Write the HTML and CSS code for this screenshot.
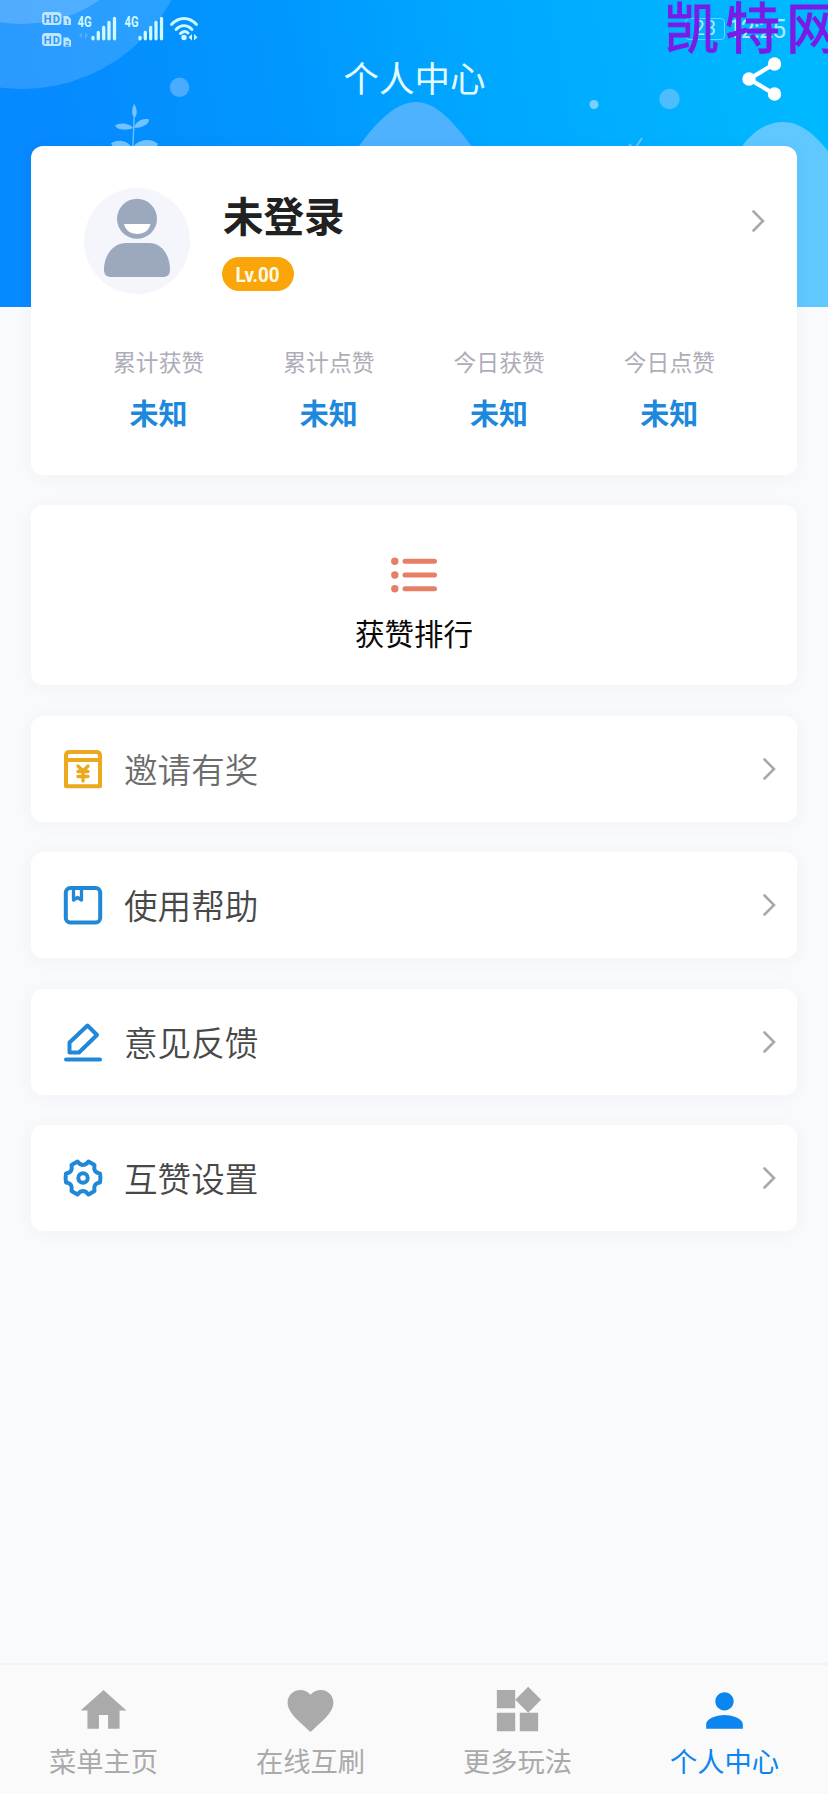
FILE: index.html
```html
<!DOCTYPE html>
<html lang="zh-CN">
<head>
<meta charset="utf-8">
<title>个人中心</title>
<link rel="stylesheet" href="styles.css">
</head>
<body>
<div class="screen">
  <header class="hero">
    <svg class="hero-art" viewBox="0 0 828 307" aria-hidden="true">
      <circle cx="22" cy="-81" r="170" fill="#fff" opacity=".15"/>
      <circle cx="22" cy="-115" r="139" fill="#fff" opacity=".18"/>
      <circle cx="179.500" cy="87.300" r="9.700" fill="#4bacff"/>
      <circle cx="594" cy="104.500" r="4.500" fill="#79d0ff"/>
      <circle cx="669.500" cy="99" r="10.200" fill="#4dbdff"/>
      <path d="M355 152C378 118 398 102 416 102C436 102 453 121 476 152z" fill="#4eb2ff"/>
      <path d="M738 152C751 132 766 122 783 122C801 122 815 135 828 151V307H738z" fill="#5fc8ff"/>
      <g fill="#72c4ff">
        <path d="M134.200 104C138 109 137 117 134.500 117C131.500 117 131.300 108 134.200 104z"/>
        <path d="M134 128C136 121 143 118 149 119.500C149 125 141 128 134 128z"/>
        <path d="M133 128C130 123 120 122 115 125.500C118 131 128 130 133 128z"/>
        <path d="M134 146C138 140 151 137 158 144L156 148H134z"/>
        <path d="M132 148C128 140 116 139 111 143.500L114 148z"/>
        <path d="M134.300 115L132.800 148" stroke="#72c4ff" stroke-width="1.300"/>
      </g>
      <path d="M636 147L642 138M632 147L629 144" stroke="#5fc8ff" stroke-width="2"/>
    </svg>
    <div class="status">
      <svg class="signals" width="170" height="40" viewBox="36 8 170 40" aria-hidden="true">
        <g fill="#bfe6ff">
          <rect x="42" y="12" width="19.500" height="13" rx="3.500"/>
          <rect x="42" y="33" width="19.500" height="13" rx="3.500"/>
          <path d="M63.500 16H68L71 19V25H63.500zM63.500 37.500H68L71 40.500V46.500H63.500z"/>
        </g>
        <g class="hd"><text x="43.800" y="22.700" textLength="16">HD</text><text x="43.800" y="43.700" textLength="16">HD</text></g>
        <g class="sim"><text x="65" y="24">1</text><text x="65" y="45.500">2</text></g>
        <g class="net"><text x="77.500" y="27" textLength="14" lengthAdjust="spacingAndGlyphs">4G</text><text x="124.500" y="27" textLength="14" lengthAdjust="spacingAndGlyphs">4G</text></g>
        <g stroke="#d0f8ff" stroke-width="3.300" stroke-linecap="round">
          <path d="M93 37.500V38.800M98.300 32.500V38.800M103.700 27.500V38.800M109 22.500V38.800M114.500 18.500V38.800"/>
          <path d="M140 37.500V38.800M145.300 32.500V38.800M150.700 27.500V38.800M156 22.500V38.800M161.500 18.500V38.800"/>
        </g>
        <path d="M82 32L79 35.500L82 39zM85 32L88 35.500L85 39z" fill="#4cb0ff"/>
        <g fill="none" stroke="#d0f8ff" stroke-width="3" stroke-linecap="round">
          <path d="M171.500 24.500C179 16.500 189 16.500 196.500 24.500M176 29.500C181 24.500 187 24.500 192 29.500M180.500 33.500C183 31 186 31 188 33"/>
        </g>
        <circle cx="184" cy="37.500" r="2.700" fill="#d0f8ff"/>
        <path d="M192 34L188.500 37.200L192 40.400zM194 34L197.500 37.200L194 40.400z" fill="#d0f8ff"/>
      </svg>
      <div class="status-right">
        <span class="battery">23</span>
        <span class="clock">12:25</span>
      </div>
    </div>
    <div class="titlebar">
      <h1>个人中心</h1>
      <svg class="share" width="44" height="48" viewBox="738 55 44 48" aria-hidden="true">
        <path d="M773.500 64L748 79L773.500 94" fill="none" stroke="#fff" stroke-width="4.300"/>
        <g fill="#fff"><circle cx="748" cy="79" r="6.700"/><circle cx="773.500" cy="64" r="6.700"/><circle cx="773.500" cy="94" r="6.700"/></g>
      </svg>
    </div>
    <span class="watermark">凯特网</span>
  </header>

  <main class="content">
    <section class="card profile">
      <div class="user">
        <svg class="avatar" width="106" height="106" viewBox="84 188.500 106 106" aria-hidden="true">
          <circle cx="137" cy="241.500" r="53" fill="#f5f6fc"/>
          <circle cx="137" cy="219.300" r="20" fill="#9ba8be"/>
          <path d="M124 224.500H150.500C149 231 144 234.500 137.300 234.500S125.500 231 124 224.500z" fill="#fff"/>
          <path d="M126 243.500H149C162 243.500 170 256 170 270C170 275 168 277.500 162 277.500H112C106 277.500 104 275 104 270C104 256 113 243.500 126 243.500z" fill="#9ba8be"/>
        </svg>
        <div class="who">
          <h2>未登录</h2>
          <span class="level"><b>Lv.00</b></span>
        </div>
        <svg class="chevron" width="13" height="22" viewBox="0 0 13 22"><path d="M1.500 1.500L11 11L1.500 20.500"/></svg>
      </div>
      <dl class="stats">
        <div><dt>累计获赞</dt><dd>未知</dd></div>
        <div><dt>累计点赞</dt><dd>未知</dd></div>
        <div><dt>今日获赞</dt><dd>未知</dd></div>
        <div><dt>今日点赞</dt><dd>未知</dd></div>
      </dl>
    </section>

    <section class="card rank">
      <svg width="46" height="36" viewBox="0 0 46 36" aria-hidden="true">
        <g fill="#e67f66"><circle cx="3.800" cy="4.300" r="3.700"/><circle cx="3.800" cy="18" r="3.700"/><circle cx="3.800" cy="31.700" r="3.700"/></g>
        <path d="M14 4.300H43.500M14 18H43.500M14 31.700H43.500" stroke="#e67f66" stroke-width="5" stroke-linecap="round"/>
      </svg>
      <span>获赞排行</span>
    </section>

    <a class="card row row-light">
      <svg class="icon gold" width="40" height="40" viewBox="0 0 40 40"><path d="M3 37.300V6.500Q3 3 6.500 3H33.500Q37 3 37 6.500V37.300zM3 11H37"/><path d="M15 17L20 22L25 17M20 22V32M15 22.500H25M15 27.500H25" stroke-width="3.300"/></svg>
      <span>邀请有奖</span>
      <svg class="chevron" width="13" height="22" viewBox="0 0 13 22"><path d="M1.500 1.500L11 11L1.500 20.500"/></svg>
    </a>
    <a class="card row">
      <svg class="icon" width="40" height="40" viewBox="0 0 40 40"><rect x="2.800" y="3" width="34.400" height="34.400" rx="4.500"/><path d="M10.500 3.500V15L14.500 12.500L18.500 15V3.500" stroke-width="3.300"/></svg>
      <span>使用帮助</span>
      <svg class="chevron" width="13" height="22" viewBox="0 0 13 22"><path d="M1.500 1.500L11 11L1.500 20.500"/></svg>
    </a>
    <a class="card row">
      <svg class="icon" width="40" height="40" viewBox="0 0 40 40"><path d="M24.500 3.500L34 13L16 30.500H6.500V20.500zM3 37.500H37"/></svg>
      <span>意见反馈</span>
      <svg class="chevron" width="13" height="22" viewBox="0 0 13 22"><path d="M1.500 1.500L11 11L1.500 20.500"/></svg>
    </a>
    <a class="card row">
      <svg class="icon" width="40" height="40" viewBox="0 0 40 40"><path d="M14.500 3.500C16 5.500 17.500 7 20 7S24 5.500 25.500 3.500L31.500 7C30.500 12 32 14.800 37 15.500Q37.800 20 37 24.500C32 25.200 30.500 28 31.500 33L25.500 36.500C24 34.500 22.500 33 20 33S16 34.500 14.500 36.500L8.500 33C9.500 28 8 25.200 3 24.500Q2.200 20 3 15.500C8 14.800 9.500 12 8.500 7z"/><circle cx="20" cy="20" r="4.700"/></svg>
      <span>互赞设置</span>
      <svg class="chevron" width="13" height="22" viewBox="0 0 13 22"><path d="M1.500 1.500L11 11L1.500 20.500"/></svg>
    </a>
  </main>

  <nav class="tabs">
    <a><svg viewBox="0 0 24 24"><path d="M10 20v-6h4v6h5v-8h3L12 3 2 12h3v8z"/></svg><span>菜单主页</span></a>
    <a><svg viewBox="0 0 24 24"><path d="M12 21.350l-1.450-1.320C5.400 15.360 2 12.280 2 8.500 2 5.420 4.420 3 7.500 3c1.740 0 3.410.810 4.500 2.090C13.090 3.810 14.760 3 16.500 3 19.580 3 22 5.420 22 8.500c0 3.780-3.400 6.860-8.550 11.540L12 21.350z"/></svg><span>在线互刷</span></a>
    <a><svg viewBox="0 0 24 24"><path d="M13 13v8h8v-8zM3 21h8v-8H3zM3 3v8h8V3zM16.660 1.690L11 7.340 16.660 13l5.660-5.660z"/></svg><span>更多玩法</span></a>
    <a class="active"><svg viewBox="0 0 24 24"><path d="M12 12c2.210 0 4-1.790 4-4s-1.790-4-4-4-4 1.790-4 4 1.790 4 4 4zm0 2c-2.670 0-8 1.340-8 4v2h16v-2c0-2.660-5.330-4-8-4z"/></svg><span>个人中心</span></a>
  </nav>
</div>
</body>
</html>
```
FILE: styles.css
```css
* { box-sizing: border-box; }
body, h1, h2, dl, dd { margin: 0; }
body {
  font-family: Roboto, "Noto Sans CJK SC", sans-serif;
  background: #f9fafc;
}
svg { display: block; flex: none; }

.screen {
  display: flex;
  flex-direction: column;
  height: 1794px;
  overflow: hidden;
}

.hero {
  position: relative;
  flex: none;
  height: 307px;
  overflow: hidden;
  background: linear-gradient(80deg, #0789ff 8%, #0098ff 38%, #00a8ff 60%, #00b8ff 95%);
}
.hero-art { position: absolute; inset: 0; width: 828px; height: 307px; }

.status {
  position: relative;
  display: flex;
  justify-content: space-between;
  height: 54px;
  padding: 8px 43px 0 36px;
}
.hd text { font: bold 11px Roboto, sans-serif; fill: #2b98f5; }
.sim text { font: bold 8px Roboto, sans-serif; fill: #2b98f5; }
.net text { font: bold 14.5px Roboto, sans-serif; fill: #d0f8ff; }
.status-right {
  display: flex;
  align-items: center;
  gap: 3px;
  height: 42px;
  color: #a8ecff;
}
.battery {
  width: 40px;
  height: 22px;
  border: 1.5px solid #62d4ff;
  border-radius: 4px;
  font-size: 20px;
  line-height: 19px;
  text-align: center;
}
.clock { font-size: 25px; letter-spacing: -1px; }

.titlebar {
  position: relative;
  display: grid;
  grid-template-columns: 90px 1fr 90px;
  align-items: center;
  height: 50px;
}
.titlebar h1 {
  grid-column: 2;
  padding: 3px 0 0 1px;
  font-size: 35.5px;
  font-weight: 400;
  line-height: 47px;
  text-align: center;
  color: #e4fcff;
}
.share { margin-left: 1px; }

.watermark {
  position: absolute;
  left: 664px;
  top: -6px;
  font: 400 55px/60px "Noto Sans CJK SC", sans-serif;
  letter-spacing: 6px;
  white-space: nowrap;
  color: #7a1be6;
  -webkit-text-stroke: 1px #7a1be6;
}

.content {
  position: relative;
  flex: 1;
  display: flex;
  flex-direction: column;
  gap: 30.4px;
  margin-top: -161px;
  padding: 0 31px;
}
.card {
  flex: none;
  background: #fff;
  border-radius: 12px;
  box-shadow: 0 2px 18px rgba(40, 60, 110, .045);
}

.profile { height: 329px; padding-top: 42px; }
.user { display: flex; height: 106px; padding: 0 32px 0 53px; }
.who { flex: 1; padding-left: 32px; }
.who h2 { height: 69px; padding: 2px 0 0 1px; font-size: 40.5px; line-height: 56px; font-weight: 700; color: #212121; }
.level {
  display: flex;
  align-items: center;
  justify-content: center;
  width: 72px;
  height: 34px;
  padding-top: 2px;
  border-radius: 17px;
  background: #faa50a;
  color: #fffbe8;
  font-size: 20px;
  line-height: 32px;
}
.level b { transform: scaleX(.94); }
.chevron path {
  fill: none;
  stroke: #a9a9ad;
  stroke-width: 2.6;
  stroke-linecap: round;
}
.user .chevron { margin-top: 22px; }

.stats {
  display: grid;
  grid-template-columns: repeat(4, 1fr);
  padding: 54px 42.5px 0;
  text-align: center;
}
.stats dt { font-size: 22.8px; line-height: 32px; color: #afadb9; }
.stats dd { margin-top: 15px; font-size: 29px; line-height: 40px; font-weight: 700; color: #1e88dd; }

.rank {
  display: flex;
  flex-direction: column;
  align-items: center;
  height: 180px;
  padding-top: 52px;
  font-size: 29.5px;
  line-height: 42px;
  color: #0a0a0a;
}
.rank span { margin-top: 21px; }

.row {
  display: flex;
  align-items: center;
  height: 106px;
  padding: 0 21px 0 32px;
  font-size: 33.6px;
  font-weight: 350;
  color: #484848;
}
.row-light { color: #6c6c6c; }
.row span { flex: 1; margin-left: 21px; padding-top: 6px; line-height: 48px; }
.icon { fill: none; stroke: #2088d6; stroke-width: 4; stroke-linecap: round; stroke-linejoin: round; }
.gold { stroke: #eda91e; }

.tabs {
  position: relative;
  flex: none;
  display: grid;
  grid-template-columns: repeat(4, 1fr);
  height: 131px;
  border-top: 2px solid #f1f3f6;
  background: #fafafa;
}
.tabs a {
  display: flex;
  flex-direction: column;
  align-items: center;
  padding-top: 18px;
  color: #aaa;
}
.tabs svg { width: 55px; height: 55px; fill: currentColor; }
.tabs span { margin-top: 6px; font-size: 27.3px; line-height: 38px; }
.tabs .active { color: #0b86f0; }
```
